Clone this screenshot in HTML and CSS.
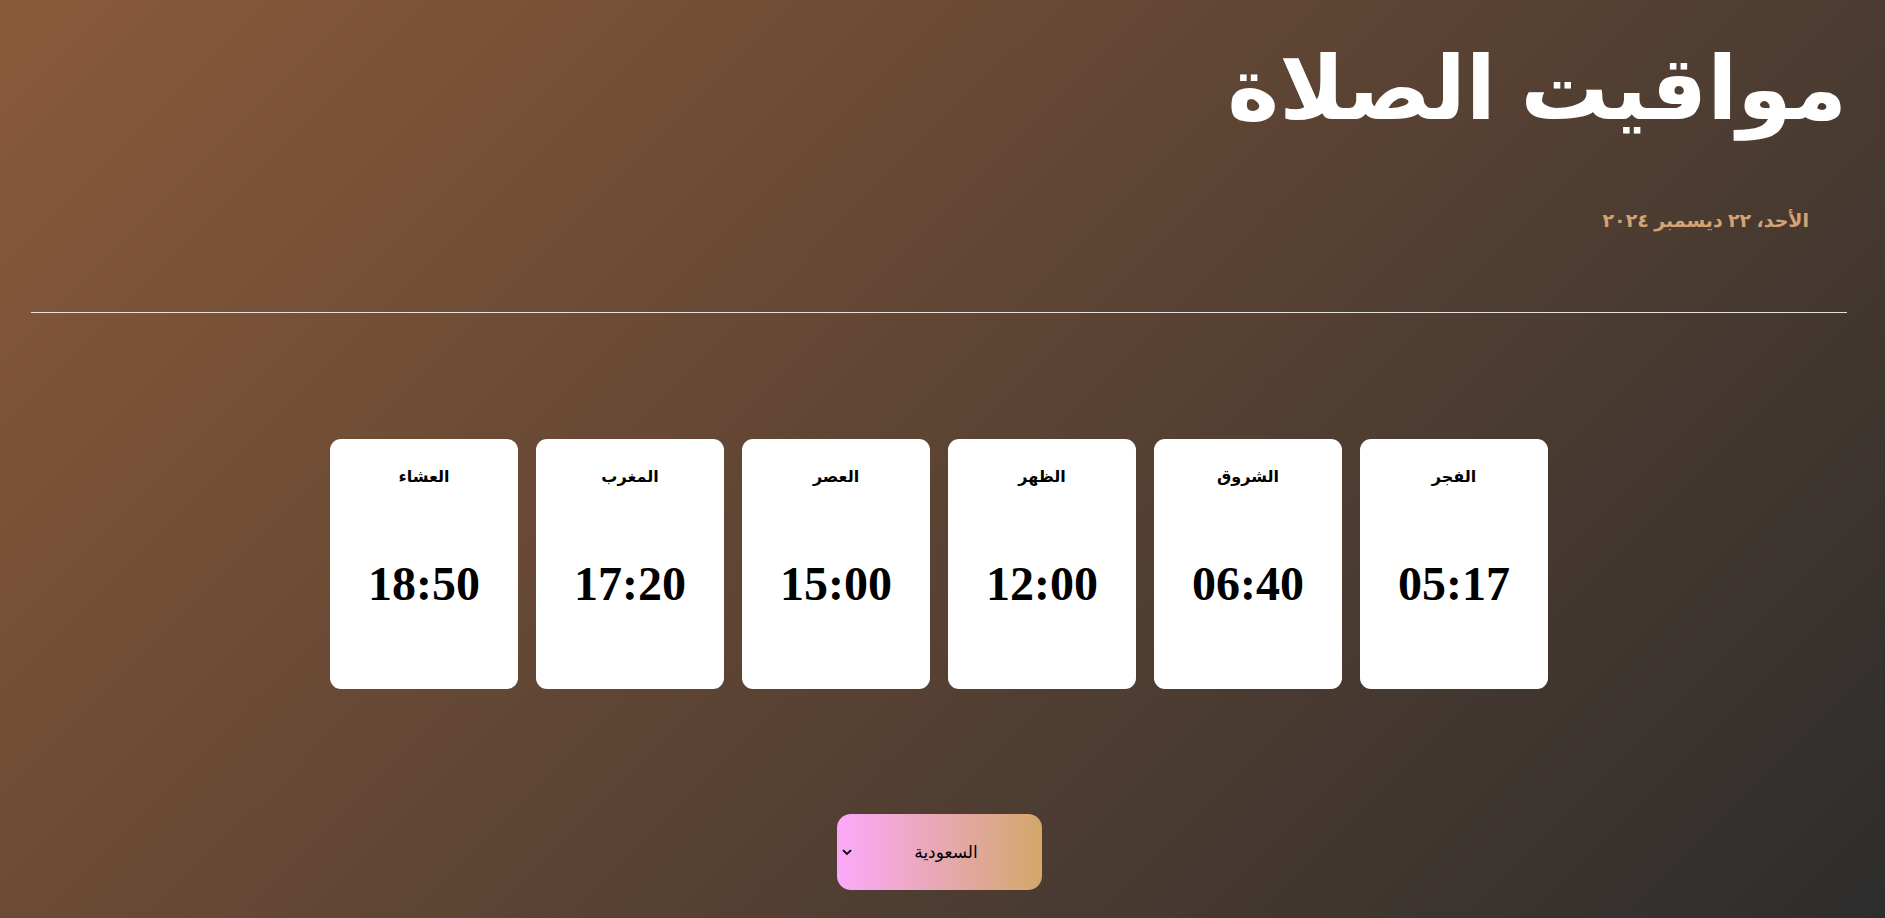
FILE: index.html
```html
<!DOCTYPE html>
<html lang="ar" dir="rtl">
<head>
<meta charset="utf-8">
<title>مواقيت الصلاة</title>
<link rel="stylesheet" href="styles.css">
</head>
<body>
<main class="page">
  <header class="head">
    <h1 class="title">مواقيت الصلاة</h1>
    <p class="date">الأحد، ٢٢ ديسمبر ٢٠٢٤</p>
  </header>
  <hr class="rule">
  <section class="cards">
    <div class="card"><div class="name">الفجر</div><div class="time">05:17</div></div>
    <div class="card"><div class="name">الشروق</div><div class="time">06:40</div></div>
    <div class="card"><div class="name">الظهر</div><div class="time">12:00</div></div>
    <div class="card"><div class="name">العصر</div><div class="time">15:00</div></div>
    <div class="card"><div class="name">المغرب</div><div class="time">17:20</div></div>
    <div class="card"><div class="name">العشاء</div><div class="time">18:50</div></div>
  </section>
  <div class="picker">
    <div class="select-wrap">
      <select class="country">
        <option>السعودية</option>
        <option>مصر</option>
        <option>الإمارات</option>
      </select>
      <svg class="chev" width="10" height="7" viewBox="0 0 10 7"><path d="M1 1.2 L5 5 L9 1.2" fill="none" stroke="#000" stroke-width="1.8"/></svg>
    </div>
  </div>
</main>
</body>
</html>
```
FILE: styles.css
```css
html, body {
  margin: 0;
  height: 100%;
}
body {
  background: linear-gradient(135deg, #8b5a3a 0%, #2d2d2d 100%);
  font-family: "Liberation Serif", "DejaVu Sans", serif;
  color: #fff;
  overflow: hidden;
}
.page {
  padding: 36px 38px 0 31px;
}
.title {
  margin: 0;
  font-family: "Liberation Sans", "DejaVu Sans", sans-serif;
  font-size: 88px;
  font-weight: bold;
  line-height: 1.2;
  color: #fff;
  text-align: right;
}
.date {
  margin: 69px 0 0;
  padding-right: 38px;
  font-family: "Liberation Sans", "DejaVu Sans", sans-serif;
  font-size: 19px;
  font-weight: bold;
  color: #d4a373;
  line-height: 20px;
}
.rule {
  margin: 81px 0 0;
  border: 0;
  border-top: 1px solid #e6e0dc;
  height: 0;
}
.cards {
  display: flex;
  justify-content: center;
  gap: 18px;
  margin-top: 126px;
}
.card {
  width: 188px;
  height: 250px;
  box-sizing: border-box;
  background: #fff;
  border-radius: 11px;
  color: #000;
  display: flex;
  flex-direction: column;
  align-items: center;
  padding-top: 28px;
}
.name {
  font-size: 16px;
  font-weight: bold;
  line-height: 20px;
}
.time {
  margin-top: 69px;
  font-family: "Liberation Serif", serif;
  font-size: 48px;
  font-weight: bold;
  line-height: 56px;
}
.picker {
  display: flex;
  justify-content: center;
  margin-top: 125px;
}
.select-wrap {
  position: relative;
  width: 205px;
  height: 76px;
}
.country {
  appearance: none;
  -webkit-appearance: none;
  width: 205px;
  height: 76px;
  border: 0;
  border-radius: 14px;
  background: linear-gradient(90deg, #fba9fb 0%, #d4a76a 100%);
  font-family: "DejaVu Sans", sans-serif;
  font-size: 17px;
  color: #000;
  text-align: center;
  padding: 0 0 0 14px;
  direction: rtl;
}
.chev {
  position: absolute;
  left: 5px;
  top: 35px;
  pointer-events: none;
}
```
